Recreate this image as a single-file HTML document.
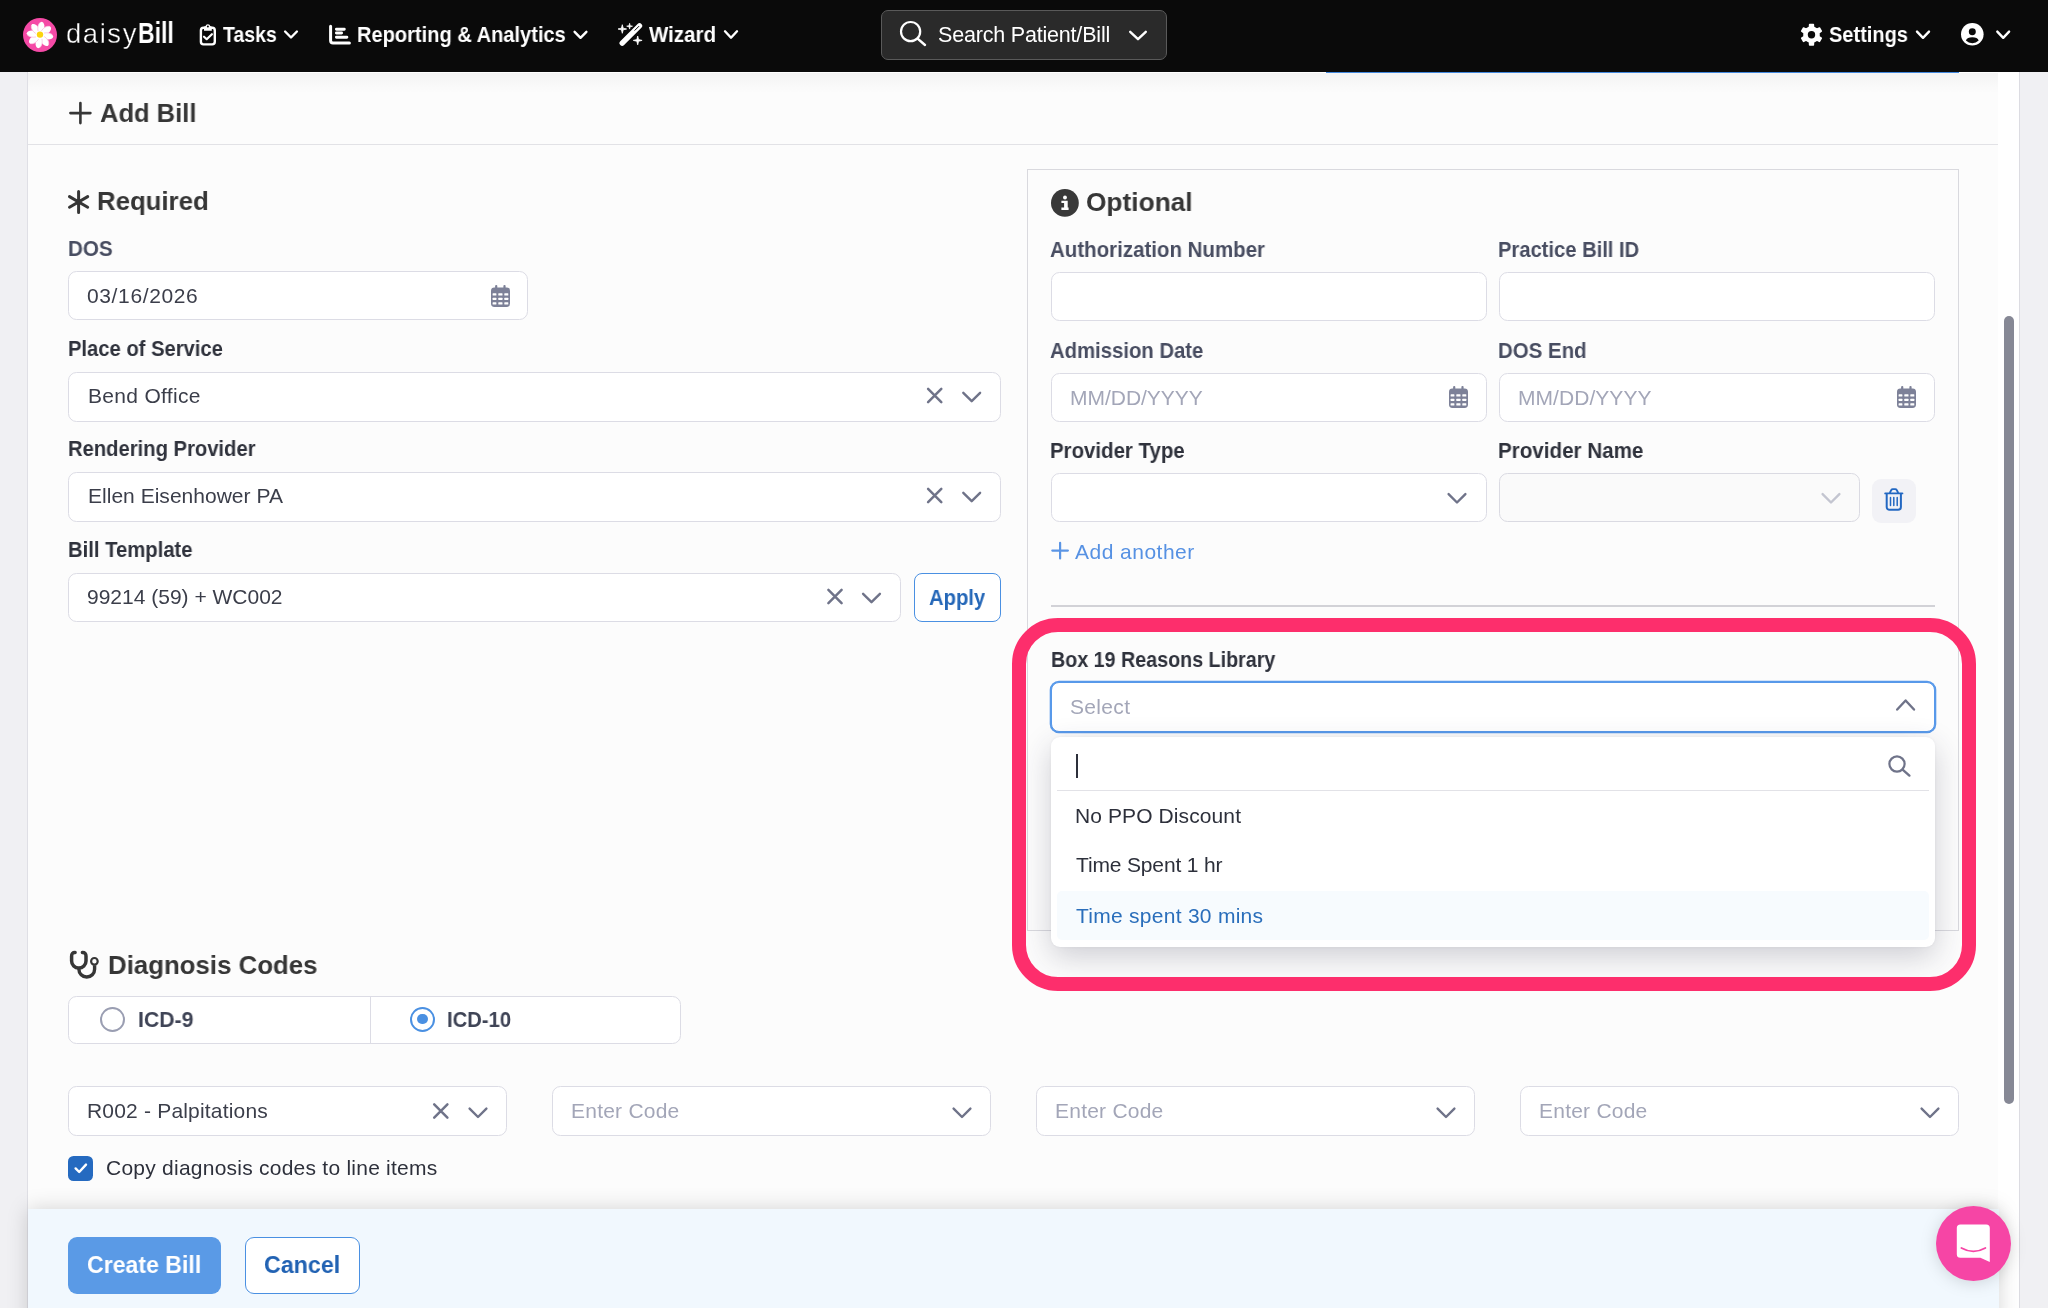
<!DOCTYPE html>
<html lang="en"><head><meta charset="utf-8"><title>daisyBill - Add Bill</title>
<style>
*{box-sizing:border-box;margin:0;padding:0}
html,body{width:2048px;height:1308px;overflow:hidden}
body{background:#f0f0f3;font-family:"Liberation Sans",Arial,sans-serif;position:relative;color:#2d303b}
.a{position:absolute}
.t{position:absolute;white-space:pre;line-height:1;will-change:transform}
.b{font-weight:700}
nav{position:absolute;left:0;top:0;width:2048px;height:72px;background:#0a0a0a;z-index:20}
.panel{position:absolute;left:28px;top:72px;width:1992px;height:1236px;background:#fff;border-right:1px solid #dcdce2}
.inner{position:absolute;left:0;top:0;width:1970px;height:1236px;background:#fcfcfc}
.inp{position:absolute;background:#fff;border:1px solid #dcdce5;border-radius:8.5px}
.dis{background:#fafafa;border-color:#dadae2}
svg{position:absolute;overflow:visible}
</style></head><body>
<div class="a" style="left:27px;top:72px;width:1px;height:1236px;background:#dfdfe5"></div>
<div class="panel"><div class="inner"></div></div>
<div class="a" style="left:28px;top:72px;width:1970px;height:1px;background:#fff"></div>
<div class="a" style="left:1326px;top:72px;width:633px;height:1px;background:#4288de"></div>
<div class="a" style="left:28px;top:73px;width:1970px;height:20px;background:linear-gradient(to bottom,rgba(0,0,0,.035),rgba(0,0,0,0))"></div>
<div class="a" style="left:28px;top:144px;width:1970px;height:1px;background:#e2e2e6"></div>
<svg class="a" style="left:0;top:0" width="1" height="1"><path d="M70.4 113.1 H90.4 M80.4 103.1 V123.1" stroke="#363636" stroke-width="2.6" stroke-linecap="round"/></svg>
<svg class="a" style="left:0;top:0" width="1" height="1"><path d="M78.6 191.4 V212.4 M69.5 196.6 L87.7 207.2 M87.7 196.6 L69.5 207.2" stroke="#363636" stroke-width="3" stroke-linecap="round"/></svg>
<div class="inp" style="left:68px;top:271px;width:460px;height:49px;"></div>
<svg class="a" style="left:490.7px;top:284.7px" width="19" height="22" viewBox="0 0 19 22">
<rect x="4.1" y="0" width="2.2" height="5" rx="1" fill="#7d8198"/><rect x="12.4" y="0" width="2.2" height="5" rx="1" fill="#7d8198"/>
<rect x="0" y="2.4" width="19" height="19.5" rx="3.4" fill="#7d8198"/>
<g fill="#fff"><rect x="1.6" y="8.2" width="3.8" height="2.2" rx=".5"/><rect x="1.6" y="12.7" width="3.8" height="2.4" rx=".5"/><rect x="1.6" y="17.3" width="3.8" height="2.2" rx=".5"/><rect x="7.3" y="8.2" width="4.2" height="2.2" rx=".5"/><rect x="7.3" y="12.7" width="4.2" height="2.4" rx=".5"/><rect x="7.3" y="17.3" width="4.2" height="2.2" rx=".5"/><rect x="13.3" y="8.2" width="4.0" height="2.2" rx=".5"/><rect x="13.3" y="12.7" width="4.0" height="2.4" rx=".5"/><rect x="13.3" y="17.3" width="4.0" height="2.2" rx=".5"/></g></svg>
<div class="inp" style="left:68px;top:372px;width:933px;height:49.5px;"></div>
<svg class="a" style="left:0;top:0" width="1" height="1"><path d="M928.1 388.9 L941.3 402.1 M941.3 388.9 L928.1 402.1" fill="none" stroke="#6f7389" stroke-width="2.5" stroke-linecap="round"/></svg>
<svg class="a" style="left:0;top:0" width="1" height="1"><path d="M963.3 392.8 L971.7 401.2 L980.1 392.8" fill="none" stroke="#6f7389" stroke-width="2.4" stroke-linecap="round" stroke-linejoin="round"/></svg>
<div class="inp" style="left:68px;top:472px;width:933px;height:49.5px;"></div>
<svg class="a" style="left:0;top:0" width="1" height="1"><path d="M928.1 488.9 L941.3 502.1 M941.3 488.9 L928.1 502.1" fill="none" stroke="#6f7389" stroke-width="2.5" stroke-linecap="round"/></svg>
<svg class="a" style="left:0;top:0" width="1" height="1"><path d="M963.3 492.8 L971.7 501.2 L980.1 492.8" fill="none" stroke="#6f7389" stroke-width="2.4" stroke-linecap="round" stroke-linejoin="round"/></svg>
<div class="inp" style="left:68px;top:573px;width:833px;height:49px;"></div>
<svg class="a" style="left:0;top:0" width="1" height="1"><path d="M828.4 589.9 L841.6 603.1 M841.6 589.9 L828.4 603.1" fill="none" stroke="#6f7389" stroke-width="2.5" stroke-linecap="round"/></svg>
<svg class="a" style="left:0;top:0" width="1" height="1"><path d="M863.1 593.8 L871.5 602.2 L879.9 593.8" fill="none" stroke="#6f7389" stroke-width="2.4" stroke-linecap="round" stroke-linejoin="round"/></svg>
<div class="inp" style="left:914px;top:573px;width:87px;height:49px;border:1.5px solid #4a90e2;border-radius:8px"></div>
<div class="a" style="left:1027px;top:169px;width:932px;height:762px;border:1px solid #d9d9de;background:transparent"></div>
<svg class="a" style="left:1050.8px;top:188.9px" width="27.8" height="27.8" viewBox="0 0 27.8 27.8"><circle cx="13.9" cy="13.9" r="13.9" fill="#393939"/><circle cx="14" cy="8.5" r="1.95" fill="#fff"/><path d="M10.4 11.7 h6.3 v6.9 h.9 v2.4 h-7.2 v-2.4 h2.7 v-4.5 h-2.7z" fill="#fff"/></svg>
<div class="inp" style="left:1051px;top:272px;width:436px;height:49px;"></div>
<div class="inp" style="left:1499px;top:272px;width:436px;height:49px;"></div>
<div class="inp" style="left:1051px;top:373px;width:436px;height:49px;"></div>
<div class="inp" style="left:1499px;top:373px;width:436px;height:49px;"></div>
<svg class="a" style="left:1449px;top:385.7px" width="19" height="22" viewBox="0 0 19 22">
<rect x="4.1" y="0" width="2.2" height="5" rx="1" fill="#7d8198"/><rect x="12.4" y="0" width="2.2" height="5" rx="1" fill="#7d8198"/>
<rect x="0" y="2.4" width="19" height="19.5" rx="3.4" fill="#7d8198"/>
<g fill="#fff"><rect x="1.6" y="8.2" width="3.8" height="2.2" rx=".5"/><rect x="1.6" y="12.7" width="3.8" height="2.4" rx=".5"/><rect x="1.6" y="17.3" width="3.8" height="2.2" rx=".5"/><rect x="7.3" y="8.2" width="4.2" height="2.2" rx=".5"/><rect x="7.3" y="12.7" width="4.2" height="2.4" rx=".5"/><rect x="7.3" y="17.3" width="4.2" height="2.2" rx=".5"/><rect x="13.3" y="8.2" width="4.0" height="2.2" rx=".5"/><rect x="13.3" y="12.7" width="4.0" height="2.4" rx=".5"/><rect x="13.3" y="17.3" width="4.0" height="2.2" rx=".5"/></g></svg>
<svg class="a" style="left:1897px;top:385.7px" width="19" height="22" viewBox="0 0 19 22">
<rect x="4.1" y="0" width="2.2" height="5" rx="1" fill="#7d8198"/><rect x="12.4" y="0" width="2.2" height="5" rx="1" fill="#7d8198"/>
<rect x="0" y="2.4" width="19" height="19.5" rx="3.4" fill="#7d8198"/>
<g fill="#fff"><rect x="1.6" y="8.2" width="3.8" height="2.2" rx=".5"/><rect x="1.6" y="12.7" width="3.8" height="2.4" rx=".5"/><rect x="1.6" y="17.3" width="3.8" height="2.2" rx=".5"/><rect x="7.3" y="8.2" width="4.2" height="2.2" rx=".5"/><rect x="7.3" y="12.7" width="4.2" height="2.4" rx=".5"/><rect x="7.3" y="17.3" width="4.2" height="2.2" rx=".5"/><rect x="13.3" y="8.2" width="4.0" height="2.2" rx=".5"/><rect x="13.3" y="12.7" width="4.0" height="2.4" rx=".5"/><rect x="13.3" y="17.3" width="4.0" height="2.2" rx=".5"/></g></svg>
<div class="inp" style="left:1051px;top:473px;width:436px;height:49px;"></div>
<div class="inp dis" style="left:1499px;top:473px;width:361px;height:49px;"></div>
<svg class="a" style="left:0;top:0" width="1" height="1"><path d="M1448.6 494.1 L1457.0 502.5 L1465.4 494.1" fill="none" stroke="#6f7389" stroke-width="2.4" stroke-linecap="round" stroke-linejoin="round"/></svg>
<svg class="a" style="left:0;top:0" width="1" height="1"><path d="M1822.6 494.1 L1831.0 502.5 L1839.4 494.1" fill="none" stroke="#c3c5d0" stroke-width="2.4" stroke-linecap="round" stroke-linejoin="round"/></svg>
<div class="a" style="left:1872px;top:478.5px;width:43.700000000000045px;height:44.200000000000045px;background:#f2f2f6;border-radius:9px"></div>
<svg class="a" style="left:0;top:0" width="1" height="1"><g fill="none" stroke="#2368c2">
<path d="M1885.2 493.4 H1902.4" stroke-width="1.9" stroke-linecap="round"/>
<path d="M1889.7 493 L1891.3 490 a1.7 1.7 0 0 1 1.5 -.9 h2.4 a1.7 1.7 0 0 1 1.5 .9 L1898.3 493" stroke-width="1.8" stroke-linejoin="round"/>
<path d="M1886.7 494 V507 a2.8 2.8 0 0 0 2.8 2.8 h8.6 a2.8 2.8 0 0 0 2.8 -2.8 V494" stroke-width="2"/>
<path d="M1890.5 497.4 V505.6 M1893.8 497.4 V505.6 M1897.2 497.4 V505.6" stroke-width="1.5" stroke-linecap="round"/></g></svg>
<svg class="a" style="left:0;top:0" width="1" height="1"><path d="M1052.3 550.6 H1067.9 M1060.1 542.8 V558.4" stroke="#5b95e5" stroke-width="2.2" stroke-linecap="round"/></svg>
<div class="a" style="left:1051px;top:605px;width:884px;height:1.5px;background:#d2d2d7"></div>
<div class="inp" style="left:1051px;top:682px;width:884px;height:50px;border:1px solid #5899ea;box-shadow:0 0 0 1.3px #5899ea;border-radius:8px"></div>
<svg class="a" style="left:0;top:0" width="1" height="1"><path d="M1897.2 709.5 L1905.6 700.5 L1914.0 709.5" fill="none" stroke="#6f7389" stroke-width="2.4" stroke-linecap="round" stroke-linejoin="round"/></svg>
<div class="a" style="left:1051px;top:737px;width:884px;height:209.5px;background:#fff;border-radius:9px;box-shadow:0 10px 30px rgba(45,45,75,.22),0 0 3px rgba(50,50,80,.06)"></div>
<div class="a" style="left:1076px;top:753.5px;width:2px;height:24px;background:#2d303b"></div>
<svg class="a" style="left:1888px;top:755px" width="23" height="22" viewBox="0 0 23 22"><circle cx="9" cy="9" r="7.6" fill="none" stroke="#6f7389" stroke-width="2.2"/><path d="M14.6 14.6 L21.4 20.6" stroke="#6f7389" stroke-width="2.4" stroke-linecap="round"/></svg>
<div class="a" style="left:1057px;top:790px;width:872px;height:1px;background:#e2e2e7"></div>
<div class="a" style="left:1057px;top:890.5px;width:872px;height:49.5px;background:#f7fbfe;border-radius:5px"></div>
<svg class="a" style="left:0;top:0" width="1" height="1">
<path d="M75.1 952.5 Q71.6 952.4 71.6 956.2 V960.9 A7.2 7.2 0 0 0 86 960.9 V956.2 Q86 952.4 82.4 952.5" fill="none" stroke="#363636" stroke-width="3.5" stroke-linecap="round"/>
<path d="M78.9 968 V969.2 A7.85 7.85 0 0 0 94.6 969.2 V965.2" fill="none" stroke="#363636" stroke-width="3.4"/>
<circle cx="94.4" cy="961.3" r="3.3" fill="none" stroke="#363636" stroke-width="2.2"/></svg>
<div class="inp" style="left:68px;top:996px;width:613px;height:48px;"></div>
<div class="a" style="left:370px;top:997px;width:1px;height:46px;background:#dcdce5"></div>
<div class="a" style="left:100px;top:1006.6px;width:25.4px;height:25.4px;border:2.4px solid #9a9eb2;border-radius:50%;background:#fff"></div>
<div class="a" style="left:409.7px;top:1006.6px;width:25.4px;height:25.4px;border:2.4px solid #4a90e2;border-radius:50%;background:#fff"></div>
<div class="a" style="left:417.2px;top:1014.1px;width:10.4px;height:10.4px;border-radius:50%;background:#4a90e2"></div>
<div class="inp" style="left:68px;top:1086px;width:439px;height:50px;"></div>
<svg class="a" style="left:0;top:0" width="1" height="1"><path d="M434.2 1104.4 L447.4 1117.6 M447.4 1104.4 L434.2 1117.6" fill="none" stroke="#6f7389" stroke-width="2.5" stroke-linecap="round"/></svg>
<svg class="a" style="left:0;top:0" width="1" height="1"><path d="M469.6 1108.6 L478.0 1117.0 L486.4 1108.6" fill="none" stroke="#6f7389" stroke-width="2.4" stroke-linecap="round" stroke-linejoin="round"/></svg>
<div class="inp" style="left:552px;top:1086px;width:439px;height:50px;"></div>
<svg class="a" style="left:0;top:0" width="1" height="1"><path d="M953.6 1108.6 L962.0 1117.0 L970.4 1108.6" fill="none" stroke="#6f7389" stroke-width="2.4" stroke-linecap="round" stroke-linejoin="round"/></svg>
<div class="inp" style="left:1036px;top:1086px;width:439px;height:50px;"></div>
<svg class="a" style="left:0;top:0" width="1" height="1"><path d="M1437.6 1108.6 L1446.0 1117.0 L1454.4 1108.6" fill="none" stroke="#6f7389" stroke-width="2.4" stroke-linecap="round" stroke-linejoin="round"/></svg>
<div class="inp" style="left:1520px;top:1086px;width:439px;height:50px;"></div>
<svg class="a" style="left:0;top:0" width="1" height="1"><path d="M1921.6 1108.6 L1930.0 1117.0 L1938.4 1108.6" fill="none" stroke="#6f7389" stroke-width="2.4" stroke-linecap="round" stroke-linejoin="round"/></svg>
<div class="a" style="left:68px;top:1155.5px;width:25.400000000000006px;height:25.299999999999955px;background:#256ac0;border-radius:5.5px"></div>
<svg class="a" style="left:0;top:0" width="1" height="1"><path d="M75.6 1168.4 L79.2 1172 L86 1164.6" fill="none" stroke="#fff" stroke-width="2.4" stroke-linecap="round" stroke-linejoin="round"/></svg>
<div class="a" style="left:28px;top:1209px;width:1971px;height:120px;background:#f1f8fe;box-shadow:0 0 20px rgba(0,0,0,.17)"></div>
<div class="a" style="left:68px;top:1237px;width:153px;height:56.5px;background:#5a9ae6;border-radius:9px"></div>
<div class="a" style="left:245px;top:1237px;width:115px;height:56.5px;background:#fff;border:1.5px solid #4a90e2;border-radius:9px"></div>
<div class="a" style="left:2004px;top:316px;width:10px;height:788px;background:#868895;border-radius:5px"></div>
<nav>
<svg class="a" style="left:23.1px;top:17.7px" width="34" height="34" viewBox="-17 -17 34 34">
<circle r="17" fill="#f54aa6"/>
<g fill="#fff"><path d="M0 0 C-4.6 -4.4 -4.2 -12.6 0 -13.4 C4.2 -12.6 4.6 -4.4 0 0z" transform="rotate(8)"/><path d="M0 0 C-4.6 -4.4 -4.2 -12.6 0 -13.4 C4.2 -12.6 4.6 -4.4 0 0z" transform="rotate(53)"/><path d="M0 0 C-4.6 -4.4 -4.2 -12.6 0 -13.4 C4.2 -12.6 4.6 -4.4 0 0z" transform="rotate(98)"/><path d="M0 0 C-4.6 -4.4 -4.2 -12.6 0 -13.4 C4.2 -12.6 4.6 -4.4 0 0z" transform="rotate(143)"/><path d="M0 0 C-4.6 -4.4 -4.2 -12.6 0 -13.4 C4.2 -12.6 4.6 -4.4 0 0z" transform="rotate(188)"/><path d="M0 0 C-4.6 -4.4 -4.2 -12.6 0 -13.4 C4.2 -12.6 4.6 -4.4 0 0z" transform="rotate(233)"/><path d="M0 0 C-4.6 -4.4 -4.2 -12.6 0 -13.4 C4.2 -12.6 4.6 -4.4 0 0z" transform="rotate(278)"/><path d="M0 0 C-4.6 -4.4 -4.2 -12.6 0 -13.4 C4.2 -12.6 4.6 -4.4 0 0z" transform="rotate(323)"/></g>
<g fill="none" stroke="#f9b8d9" stroke-width=".9" stroke-linecap="round" opacity=".75"><path d="M-2.6 -4 C-3.8 -7.4 -3.4 -10.6 -1.6 -12.4" transform="rotate(8)"/><path d="M-2.6 -4 C-3.8 -7.4 -3.4 -10.6 -1.6 -12.4" transform="rotate(53)"/><path d="M-2.6 -4 C-3.8 -7.4 -3.4 -10.6 -1.6 -12.4" transform="rotate(98)"/><path d="M-2.6 -4 C-3.8 -7.4 -3.4 -10.6 -1.6 -12.4" transform="rotate(143)"/><path d="M-2.6 -4 C-3.8 -7.4 -3.4 -10.6 -1.6 -12.4" transform="rotate(188)"/><path d="M-2.6 -4 C-3.8 -7.4 -3.4 -10.6 -1.6 -12.4" transform="rotate(233)"/><path d="M-2.6 -4 C-3.8 -7.4 -3.4 -10.6 -1.6 -12.4" transform="rotate(278)"/><path d="M-2.6 -4 C-3.8 -7.4 -3.4 -10.6 -1.6 -12.4" transform="rotate(323)"/></g>
<circle cx="0" cy="-.4" r="3.2" fill="#fbd40e"/></svg>
<svg class="a" style="left:0;top:0" width="1" height="1">
<rect x="200.9" y="27.8" width="13.9" height="16.6" rx="2.6" fill="none" stroke="#fff" stroke-width="2.4"/>
<path d="M204 30.7 V27.2 a1 1 0 0 1 1 -1 h.4 a2.6 2.6 0 0 1 5 0 h.4 a1 1 0 0 1 1 1 V30.7z" fill="#fff"/>
<circle cx="207.9" cy="26.4" r="1" fill="#0a0a0a"/>
<path d="M204 36.7 l2.7 2.5 l5.2 -5" fill="none" stroke="#fff" stroke-width="2.2" stroke-linecap="round" stroke-linejoin="round"/></svg>
<svg class="a" style="left:0;top:0" width="1" height="1">
<path d="M330.6 26.3 V40.5 a2.4 2.4 0 0 0 2.4 2.4 H349.4" fill="none" stroke="#fff" stroke-width="3" stroke-linecap="round"/>
<path d="M336.4 29.2 H344.3 M336.4 33 H341.6 M336.4 37.3 H346.9" fill="none" stroke="#fff" stroke-width="2.9" stroke-linecap="round"/></svg>
<svg class="a" style="left:0;top:0" width="1" height="1">
<path d="M622.2 43.2 L639.5 25.9" stroke="#fff" stroke-width="5.4" stroke-linecap="round"/>
<path d="M634.9 30.3 L638.8 26.4" stroke="#0a0a0a" stroke-width="1" stroke-linecap="round"/>
<path d="M622.30 24.70 L623.15 28.15 L626.60 29.00 L623.15 29.85 L622.30 33.30 L621.45 29.85 L618.00 29.00 L621.45 28.15Z" fill="#fff" stroke="#fff" stroke-width=".8" stroke-linejoin="round"/>
<path d="M629.60 23.30 L630.17 25.63 L632.50 26.20 L630.17 26.77 L629.60 29.10 L629.03 26.77 L626.70 26.20 L629.03 25.63Z" fill="#fff" stroke="#fff" stroke-width=".7" stroke-linejoin="round"/>
<path d="M637.70 36.00 L638.57 39.53 L642.10 40.40 L638.57 41.27 L637.70 44.80 L636.83 41.27 L633.30 40.40 L636.83 39.53Z" fill="#fff" stroke="#fff" stroke-width=".8" stroke-linejoin="round"/></svg>
<svg class="a" style="left:0;top:0" width="1" height="1"><path d="M285.1 31.5 L291.0 37.5 L296.9 31.5" fill="none" stroke="#fff" stroke-width="2.4" stroke-linecap="round" stroke-linejoin="round"/></svg>
<svg class="a" style="left:0;top:0" width="1" height="1"><path d="M574.6 31.8 L580.5 37.8 L586.4 31.8" fill="none" stroke="#fff" stroke-width="2.4" stroke-linecap="round" stroke-linejoin="round"/></svg>
<svg class="a" style="left:0;top:0" width="1" height="1"><path d="M725.0 31.3 L731.0 37.7 L737.0 31.3" fill="none" stroke="#fff" stroke-width="2.4" stroke-linecap="round" stroke-linejoin="round"/></svg>
<div class="a" style="left:881px;top:10px;width:286px;height:50px;background:#2a2a2a;border:1px solid #5a5a5a;border-radius:7px"></div>
<svg class="a" style="left:899px;top:20px" width="28" height="27" viewBox="0 0 28 27">
<circle cx="11.6" cy="11.6" r="9.6" fill="none" stroke="#fff" stroke-width="2.2"/><path d="M18.6 18.6 L26 25" stroke="#fff" stroke-width="2.4" stroke-linecap="round"/></svg>
<svg class="a" style="left:0;top:0" width="1" height="1"><path d="M1130.2 31.8 L1138.0 39.2 L1145.8 31.8" fill="none" stroke="#fff" stroke-width="2.4" stroke-linecap="round" stroke-linejoin="round"/></svg>
<svg class="a" style="left:0;top:0" width="1" height="1"><path d="M1809.66 24.46 L1813.34 24.46 L1813.49 27.26 L1816.94 29.26 L1819.44 27.99 L1821.29 31.18 L1818.94 32.71 L1818.94 36.69 L1821.29 38.22 L1819.44 41.41 L1816.94 40.14 L1813.49 42.14 L1813.34 44.94 L1809.66 44.94 L1809.51 42.14 L1806.06 40.14 L1803.56 41.41 L1801.71 38.22 L1804.06 36.69 L1804.06 32.71 L1801.71 31.18 L1803.56 27.99 L1806.06 29.26 L1809.51 27.26Z" fill="#fff" stroke="#fff" stroke-width="1.6" stroke-linejoin="round"/><circle cx="1811.5" cy="34.7" r="3.7" fill="#0a0a0a"/></svg>
<svg class="a" style="left:0;top:0" width="1" height="1"><path d="M1917.0 31.6 L1923.0 37.8 L1929.0 31.6" fill="none" stroke="#fff" stroke-width="2.4" stroke-linecap="round" stroke-linejoin="round"/></svg>
<svg class="a" style="left:1960.5px;top:23.2px" width="22.6" height="22.6" viewBox="0 0 24 24">
<circle cx="12" cy="12" r="12" fill="#fff"/><circle cx="12" cy="9.2" r="3.7" fill="#0a0a0a"/>
<path d="M5.2 18.6 a7 4.6 0 0 1 13.6 0 a9.6 9.6 0 0 1 -13.6 0z" fill="#0a0a0a"/></svg>
<svg class="a" style="left:0;top:0" width="1" height="1"><path d="M1997.3 31.6 L2003.2 37.8 L2009.1 31.6" fill="none" stroke="#fff" stroke-width="2.4" stroke-linecap="round" stroke-linejoin="round"/></svg>
</nav>
<span class="t b" style="left:100.0px;top:99.56px;font-size:26.5px;color:#363636;transform:scaleX(0.9639);transform-origin:0 0;">Add Bill</span>
<span class="t b" style="left:97.0px;top:188.36px;font-size:26.5px;color:#363636;transform:scaleX(0.9725);transform-origin:0 0;">Required</span>
<span class="t b" style="left:68.0px;top:239.20px;font-size:21.5px;color:#484d61;transform:scaleX(0.9594);transform-origin:0 0;">DOS</span>
<span class="t" style="left:87.0px;top:285.22px;font-size:21px;color:#3b3e4a;letter-spacing:0.63px;">03/16/2026</span>
<span class="t b" style="left:68.0px;top:339.30px;font-size:21.5px;color:#2f323c;transform:scaleX(0.9391);transform-origin:0 0;">Place of Service</span>
<span class="t" style="left:87.5px;top:385.22px;font-size:21px;color:#3b3e4a;letter-spacing:0.31px;">Bend Office</span>
<span class="t b" style="left:68.0px;top:439.30px;font-size:21.5px;color:#2f323c;transform:scaleX(0.9398);transform-origin:0 0;">Rendering Provider</span>
<span class="t" style="left:87.5px;top:485.12px;font-size:21px;color:#3b3e4a;letter-spacing:0.02px;">Ellen Eisenhower PA</span>
<span class="t b" style="left:68.0px;top:540.30px;font-size:21.5px;color:#2f323c;transform:scaleX(0.9416);transform-origin:0 0;">Bill Template</span>
<span class="t" style="left:87.0px;top:586.22px;font-size:21px;color:#3b3e4a;">99214 (59) + WC002</span>
<span class="t b" style="left:929.0px;top:587.90px;font-size:21.5px;color:#2467b8;transform:scaleX(0.9408);transform-origin:0 0;">Apply</span>
<span class="t b" style="left:1086.3px;top:188.56px;font-size:26.5px;color:#363636;transform:scaleX(0.9928);transform-origin:0 0;">Optional</span>
<span class="t b" style="left:1050.0px;top:240.20px;font-size:21.5px;color:#484d61;transform:scaleX(0.9524);transform-origin:0 0;">Authorization Number</span>
<span class="t b" style="left:1498.0px;top:240.20px;font-size:21.5px;color:#484d61;transform:scaleX(0.9377);transform-origin:0 0;">Practice Bill ID</span>
<span class="t b" style="left:1050.0px;top:340.60px;font-size:21.5px;color:#484d61;transform:scaleX(0.9435);transform-origin:0 0;">Admission Date</span>
<span class="t b" style="left:1498.0px;top:340.60px;font-size:21.5px;color:#484d61;transform:scaleX(0.9509);transform-origin:0 0;">DOS End</span>
<span class="t" style="left:1070.0px;top:387.22px;font-size:21px;color:#a3a6b8;letter-spacing:-0.02px;">MM/DD/YYYY</span>
<span class="t" style="left:1518.0px;top:387.22px;font-size:21px;color:#a3a6b8;letter-spacing:0.05px;">MM/DD/YYYY</span>
<span class="t b" style="left:1050.0px;top:440.80px;font-size:21.5px;color:#2f323c;transform:scaleX(0.9500);transform-origin:0 0;">Provider Type</span>
<span class="t b" style="left:1498.0px;top:440.80px;font-size:21.5px;color:#2f323c;transform:scaleX(0.9581);transform-origin:0 0;">Provider Name</span>
<span class="t" style="left:1075.0px;top:541.22px;font-size:21px;color:#5691e3;letter-spacing:0.48px;">Add another</span>
<span class="t b" style="left:1050.5px;top:650.20px;font-size:21.5px;color:#2f323c;transform:scaleX(0.9156);transform-origin:0 0;">Box 19 Reasons Library</span>
<span class="t" style="left:1070.0px;top:695.72px;font-size:21px;color:#a3a6b8;letter-spacing:0.33px;">Select</span>
<span class="t" style="left:1075.0px;top:804.72px;font-size:21px;color:#2d303b;letter-spacing:0.10px;">No PPO Discount</span>
<span class="t" style="left:1075.5px;top:854.22px;font-size:21px;color:#2d303b;letter-spacing:-0.15px;">Time Spent 1 hr</span>
<span class="t" style="left:1075.5px;top:904.72px;font-size:21px;color:#2a6ebb;letter-spacing:0.27px;">Time spent 30 mins</span>
<span class="t b" style="left:107.8px;top:951.56px;font-size:26.5px;color:#363636;transform:scaleX(0.9744);transform-origin:0 0;">Diagnosis Codes</span>
<span class="t b" style="left:137.5px;top:1010.20px;font-size:21.5px;color:#3f4456;transform:scaleX(0.9865);transform-origin:0 0;">ICD-9</span>
<span class="t b" style="left:447.0px;top:1010.20px;font-size:21.5px;color:#3f4456;transform:scaleX(0.9397);transform-origin:0 0;">ICD-10</span>
<span class="t" style="left:87.0px;top:1099.72px;font-size:21px;color:#3b3e4a;letter-spacing:0.19px;">R002 - Palpitations</span>
<span class="t" style="left:571.0px;top:1099.72px;font-size:21px;color:#a3a6b8;letter-spacing:0.23px;">Enter Code</span>
<span class="t" style="left:1055.0px;top:1099.72px;font-size:21px;color:#a3a6b8;letter-spacing:0.23px;">Enter Code</span>
<span class="t" style="left:1539.0px;top:1099.72px;font-size:21px;color:#a3a6b8;letter-spacing:0.23px;">Enter Code</span>
<span class="t" style="left:105.5px;top:1157.22px;font-size:21px;color:#2d303b;letter-spacing:0.24px;">Copy diagnosis codes to line items</span>
<span class="t b" style="left:87.0px;top:1253.46px;font-size:24.5px;color:#fff;transform:scaleX(0.9423);transform-origin:0 0;">Create Bill</span>
<span class="t b" style="left:264.0px;top:1253.46px;font-size:24.5px;color:#2162b3;transform:scaleX(0.9484);transform-origin:0 0;">Cancel</span>
<span class="t" style="left:66.0px;top:19.92px;font-size:27.5px;color:#fff;letter-spacing:1.55px;z-index:30;-webkit-text-stroke:0.4px #0a0a0a;">daisy</span>
<span class="t b" style="left:137.6px;top:17.80px;font-size:30px;color:#fff;transform:scaleX(0.7671);transform-origin:0 0;z-index:30;">Bill</span>
<span class="t b" style="left:222.6px;top:24.37px;font-size:22px;color:#fff;transform:scaleX(0.8856);transform-origin:0 0;z-index:30;">Tasks</span>
<span class="t b" style="left:357.2px;top:24.80px;font-size:21.5px;color:#fff;transform:scaleX(0.9330);transform-origin:0 0;z-index:30;">Reporting &amp; Analytics</span>
<span class="t b" style="left:649.0px;top:24.80px;font-size:21.5px;color:#fff;transform:scaleX(0.9531);transform-origin:0 0;z-index:30;">Wizard</span>
<span class="t" style="left:937.5px;top:25.40px;font-size:21.5px;color:#fff;letter-spacing:-0.19px;z-index:30;">Search Patient/Bill</span>
<span class="t b" style="left:1829.0px;top:24.80px;font-size:21.5px;color:#fff;transform:scaleX(0.9313);transform-origin:0 0;z-index:30;">Settings</span>
<div class="a" style="left:1012px;top:618px;width:964px;height:373px;border:14px solid #fd2e6c;border-radius:46px;z-index:10"></div>
<svg class="a" style="left:1936px;top:1206px;z-index:40;filter:drop-shadow(0 2px 8px rgba(0,0,0,.14))" width="75" height="75" viewBox="0 0 75 75">
<circle cx="37.5" cy="37.5" r="37.5" fill="#f645a5"/>
<path d="M24.4 18.4 h25.8 a3.6 3.6 0 0 1 3.6 3.6 v34 l-9.4 -4.2 h-20 a3.6 3.6 0 0 1 -3.6 -3.6 v-26.2 a3.6 3.6 0 0 1 3.6 -3.6z" fill="#fff"/>
<path d="M25.4 42 q12 6.8 24 0" fill="none" stroke="#f645a5" stroke-width="1.8" stroke-linecap="round"/></svg>
</body></html>
